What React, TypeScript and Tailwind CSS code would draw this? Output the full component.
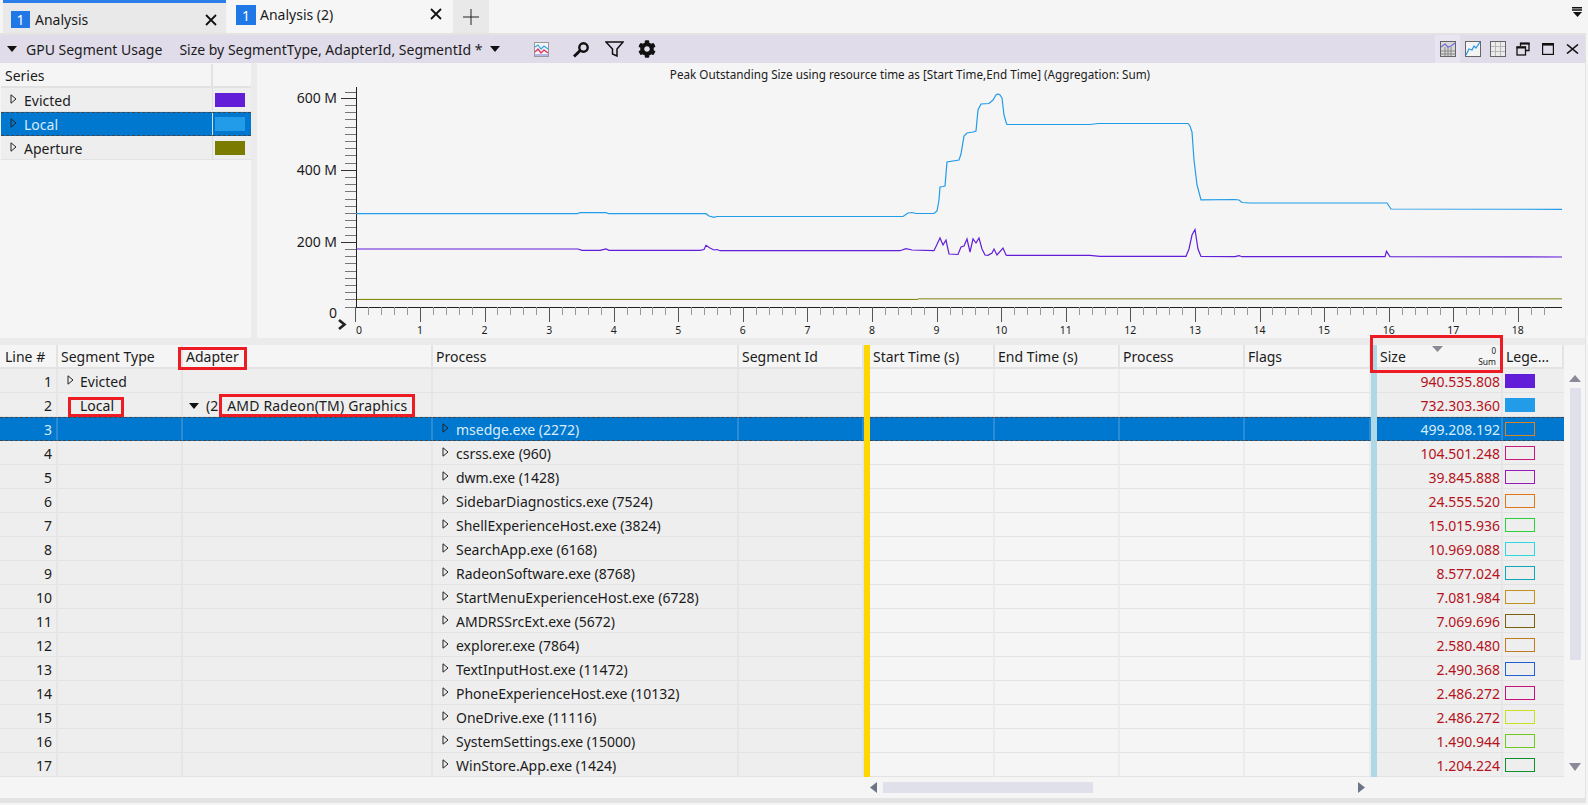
import { FaCog } from "react-icons/fa";

const GRID = "grid grid-cols-[58px_125px_250px_306px_125px_6px_125px_125px_125px_126px_6px_126px_61px]";

const HEADERS = ["Line #", "Segment Type", "Adapter", "Process", "Segment Id", "", "Start Time (s)", "End Time (s)", "Process", "Flags", "", "Size", "Lege..."];

const ROWS = [
  { name: "msedge.exe (2272)", size: "499.208.192", color: "#dd8222" },
  { name: "csrss.exe (960)", size: "104.501.248", color: "#c8197d" },
  { name: "dwm.exe (1428)", size: "39.845.888", color: "#9a19b8" },
  { name: "SidebarDiagnostics.exe (7524)", size: "24.555.520", color: "#e0761a" },
  { name: "ShellExperienceHost.exe (3824)", size: "15.015.936", color: "#2ed03a" },
  { name: "SearchApp.exe (6168)", size: "10.969.088", color: "#2ed8e0" },
  { name: "RadeonSoftware.exe (8768)", size: "8.577.024", color: "#10a8b8" },
  { name: "StartMenuExperienceHost.exe (6728)", size: "7.081.984", color: "#c09020" },
  { name: "AMDRSSrcExt.exe (5672)", size: "7.069.696", color: "#7a6010" },
  { name: "explorer.exe (7864)", size: "2.580.480", color: "#c07a20" },
  { name: "TextInputHost.exe (11472)", size: "2.490.368", color: "#2060d0" },
  { name: "PhoneExperienceHost.exe (10132)", size: "2.486.272", color: "#c8107a" },
  { name: "OneDrive.exe (11116)", size: "2.486.272", color: "#c8e020" },
  { name: "SystemSettings.exe (15000)", size: "1.490.944", color: "#70c820" },
  { name: "WinStore.App.exe (1424)", size: "1.204.224", color: "#109030" },
];

// chart lines, page coordinates
const BLUE = "356,213.7 577,213.7 580,212.6 606,212.6 609,213.7 706,213.7 709,216 714,217.3 717,216.5 903,216.5 908,213 912,212.5 916,213.5 934,213.5 937,211 939,200 940,187 943,186.5 945,186 947,162 959,160 961,154 964,136 967,133 973,132 976,131 978,110 981,104 989,103.5 993,100 996,95 998,94 1000,95 1002,98 1004,115 1006,122 1007,124.5 1090,124.5 1098,123.5 1188,123.5 1190,126 1192,132 1194,160 1197,185 1201,199.8 1235,199.5 1239,200 1242,202.5 1250,203 1387,203 1391,209 1562,209.3";
const PURPLE = "356,249 578,249 582,250.3 600,250.3 606,249 609,250.3 700,250.3 704,249.5 706,245.3 710,248 714,250 717,249.5 720,250.7 900,250.7 906,248.7 912,250 934,250.7 940,238 943,245 946,240 949,254 958,254.5 961,247 964,246 967,239 970,252 973,239 976,243 979,238 982,249 985,255 988,255.3 992,253 994,249 997,255 1003,248 1006,255 1007,255.3 1090,255.3 1100,256.3 1186,256.3 1189,249 1192,235 1195,229.5 1198,249 1201,256.5 1235,256.7 1239,255.7 1242,256.7 1385,256.7 1386.5,251.3 1390,256.7 1562,257";

const Arrow = ({ open }: { open?: boolean }) =>
  open ? (
    <svg width="10" height="6" viewBox="0 0 10 6" className="shrink-0">
      <path d="M0 0H10L5 6Z" fill="#111" />
    </svg>
  ) : (
    <svg width="7" height="10" viewBox="0 0 7 10" className="mb-[3px] shrink-0">
      <path d="M1 .8L6 5L1 9.2Z" fill="none" stroke="#222" strokeWidth="1" />
    </svg>
  );

const Tab = ({ label, active }: { label: string; active?: boolean }) => (
  <div
    className={
      active
        ? "flex h-[33px] w-[223px] items-start bg-[#f6f6f6] pl-[8px] pt-[5px]"
        : "flex h-[33px] w-[223px] items-start border-t-[3px] border-[#2b7de9] bg-[#e9e9e9] pl-[8px] pt-[8px]"
    }
  >
    <div
      className={
        active
          ? "flex h-[20px] w-[20px] items-center justify-center bg-[#1f78e6] text-[14px] text-white"
          : "flex h-[17px] w-[19px] items-center justify-center bg-[#1f78e6] text-[14px] text-white"
      }
    >
      1
    </div>
    <span className={active ? "ml-[4px] text-[14px] leading-[20px] text-[#1b1b1b]" : "ml-[5px] text-[14px] leading-[17px] text-[#1b1b1b]"}>
      {label}
    </span>
    <svg width="12" height="12" viewBox="0 0 12 12" className="ml-auto mr-[9px] mt-[3px]">
      <path d="M1 1L11 11M11 1L1 11" stroke="#111" strokeWidth="1.8" />
    </svg>
  </div>
);

const WindowIcons = () => (
  <div className="ml-auto flex h-full items-center">
    <div className="flex h-full w-[25px] items-center justify-center bg-[#e9e5f0]">
      <svg width="16" height="16" viewBox="0 0 16 16">
        <rect x=".5" y=".5" width="15" height="15" fill="#d8d8d8" stroke="#666" />
        <path d="M1 10H15M1 13H15M5 6V15M8 6V15M11 6V15" stroke="#888" />
        <path d="M1 6L5 3L8 6L11 5L15 2" fill="none" stroke="#6f6fd8" strokeWidth="1.3" />
      </svg>
    </div>
    <div className="flex h-full w-[25px] items-center justify-center">
      <svg width="16" height="16" viewBox="0 0 16 16">
        <rect x=".5" y=".5" width="15" height="15" fill="#f4f4f4" stroke="#666" />
        <path d="M1 14L4 8L7 9L9 5L11 7L15 1" fill="none" stroke="#2b9be8" strokeWidth="1.3" />
      </svg>
    </div>
    <div className="flex h-full w-[25px] items-center justify-center">
      <svg width="16" height="16" viewBox="0 0 16 16">
        <rect x=".5" y=".5" width="15" height="15" fill="#ececec" stroke="#666" />
        <path d="M1 5.5H15M1 10.5H15M5.5 1V15M10.5 1V15" stroke="#b8b8b8" />
      </svg>
    </div>
    <div className="flex h-full w-[25px] items-center justify-center">
      <svg width="14" height="14" viewBox="0 0 14 14">
        <path d="M4.5 4V1.2H13V8.5H10" fill="none" stroke="#111" strokeWidth="1.3" />
        <path d="M4 .8H13.5V2.6H4Z" fill="#111" />
        <rect x="1" y="5" width="8.5" height="8" fill="none" stroke="#111" strokeWidth="1.3" />
        <path d="M.5 4.5H10V6.5H.5Z" fill="#111" />
      </svg>
    </div>
    <div className="flex h-full w-[25px] items-center justify-center">
      <svg width="12" height="12" viewBox="0 0 12 12">
        <rect x=".6" y=".6" width="10.8" height="10.8" fill="none" stroke="#111" strokeWidth="1.2" />
        <path d="M0 0H12V2.6H0Z" fill="#111" />
      </svg>
    </div>
    <div className="flex h-full w-[25px] items-center justify-center">
      <svg width="13" height="10" viewBox="0 0 13 10">
        <path d="M1 .5L12 9.5M12 .5L1 9.5" stroke="#111" strokeWidth="1.6" />
      </svg>
    </div>
  </div>
);

const Toolbar = () => (
  <div className="flex h-[28px] items-center bg-[#e1dcea] text-[14px] text-[#1b1b1b]">
    <svg width="10" height="6" viewBox="0 0 10 6" className="ml-[7px]">
      <path d="M0 0H10L5 6Z" fill="#111" />
    </svg>
    <span className="ml-[9px]">GPU Segment Usage</span>
    <span className="ml-[17px]">Size by SegmentType, AdapterId, SegmentId *</span>
    <svg width="10" height="6" viewBox="0 0 10 6" className="ml-[8px]">
      <path d="M0 0H10L5 6Z" fill="#111" />
    </svg>
    <svg width="15" height="15" viewBox="0 0 15 15" className="ml-[34px]">
      <rect x=".5" y=".5" width="14" height="14" fill="#f4f4f4" stroke="#999" />
      <path d="M1 5L4 3L7 7L10 4L14 7" fill="none" stroke="#35a4e8" strokeWidth="1.2" />
      <path d="M1 10L4 7L7 11L10 8L14 11" fill="none" stroke="#e03b6a" strokeWidth="1.4" />
      <path d="M1 13H14" stroke="#7a7ad8" />
    </svg>
    <svg width="18" height="17" viewBox="0 0 18 16" className="ml-[23px]">
      <circle cx="11.5" cy="6" r="4.2" fill="none" stroke="#111" strokeWidth="2.4" />
      <path d="M8.2 9L2 15" stroke="#111" strokeWidth="3" />
    </svg>
    <svg width="19" height="16" viewBox="0 0 19 16" className="ml-[15px]">
      <path d="M1 1H18L12 8V15L7.5 13V8Z" fill="none" stroke="#111" strokeWidth="1.5" />
    </svg>
    <FaCog size={18} color="#111" className="ml-[14px]" />
    <WindowIcons />
  </div>
);

const Series = () => (
  <div className="w-[251px] shrink-0 pl-[1px] pt-[1px]">
    <div className="grid h-[24px] grid-cols-[212px_38px] border-b-2 border-[#e2e2e2]">
      <div className="border-r-2 border-[#e2e2e2] pl-[4px] pt-[1px] text-[14px] leading-[21px]">Series</div>
      <div />
    </div>
    {[
      { name: "Evicted", color: "#621dd8" },
      { name: "Local", color: "#229be8", selected: true },
      { name: "Aperture", color: "#7b7b00" },
    ].map((s) => (
      <div
        key={s.name}
        className={
          s.selected
            ? "grid h-[24px] grid-cols-[212px_38px] border-y border-dashed border-[#444] bg-[#0078cf] text-[#d8ecfa]"
            : "grid h-[24px] grid-cols-[212px_38px] border-b border-[#e3e3e3] bg-[#eeeeee] text-[#1b1b1b]"
        }
      >
        <div className={`flex items-center gap-[7px] border-r border-solid border-r-[#dcdcdc] pl-[9px] text-[14px] ${s.selected ? "border-r-[#2b8cd6]" : "pt-[2px]"}`}>
          <Arrow />
          {s.name}
        </div>
        <div className="flex items-center pl-[2px]">
          <div className="h-[14px] w-[30px]" style={{ background: s.color }} />
        </div>
      </div>
    ))}
  </div>
);

const Chart = () => (
  <svg width="1329" height="275" viewBox="257 63 1329 275" className="block shrink-0">
    <g className="font-['Noto_Sans',sans-serif]" fill="#1b1b1b">
      <text x="910" y="79" textAnchor="middle" fontSize="11.7">
        Peak Outstanding Size using resource time as [Start Time,End Time] (Aggregation: Sum)
      </text>
      <text x="337" y="103" textAnchor="end" fontSize="14">600 M</text>
      <text x="337" y="175" textAnchor="end" fontSize="14">400 M</text>
      <text x="337" y="247" textAnchor="end" fontSize="14">200 M</text>
      <text x="337" y="318" textAnchor="end" fontSize="14">0</text>
      {Array.from({ length: 19 }, (_, i) => (
        <text key={i} x={i === 0 ? 359 : 355.4 + i * 64.58} y="334" textAnchor="middle" fontSize="10.5">
          {i}
        </text>
      ))}
    </g>
    <g shapeRendering="crispEdges">
      <path d="M356.5 87V307.5H1562" fill="none" stroke="#222" />
      <path d="M345 92.5H356" stroke="#666" />
      {Array.from({ length: 30 }, (_, i) => {
        const y = Math.round(97.7 + i * 7.2) + 0.5;
        const major = i % 10 === 0;
        return <path key={i} d={`M${major ? 341 : 345} ${y}H356`} stroke={major ? "#333" : "#777"} />;
      })}
      {Array.from({ length: 93 }, (_, i) => {
        const x = Math.round(355.4 + i * 12.916) + 0.5;
        const major = i % 5 === 0;
        return <path key={i} d={`M${x} 307V${major ? 322 : 315}`} stroke={major ? "#555" : "#999"} />;
      })}
    </g>
    <polyline points={BLUE} fill="none" stroke="#229be8" strokeWidth="1.2" />
    <polyline points={PURPLE} fill="none" stroke="#621dd8" strokeWidth="1.2" />
    <path d="M357 299.4H918" stroke="#7b7b00" strokeWidth="1" />
    <path d="M918 298.8H1562" stroke="#a8a860" strokeWidth="1.4" />
    <path d="M339 320L344.5 324.5L339 329" fill="none" stroke="#222" strokeWidth="2.6" />
  </svg>
);

const Header = () => (
  <div className={`${GRID} h-[24px] text-[14px] text-[#1b1b1b]`}>
    {HEADERS.map((h, i) =>
      i === 5 ? (
        <div key={i} className="bg-[#ffd700]" />
      ) : i === 10 ? (
        <div key={i} className="bg-[#add8e6]" />
      ) : (
        <div key={i} className="relative border-b-2 border-r-2 border-[#e3e3e3] pl-[3px] pt-[1px] first:pl-[5px]">
          {h}
          {h === "Size" && (
            <>
              <svg width="11" height="6" viewBox="0 0 11 6" className="absolute left-[55px] top-[1px]">
                <path d="M0 0H11L5.5 6Z" fill="#8a8a94" />
              </svg>
              <span className="absolute right-[5px] top-[0px] text-[8px] leading-[12px]">0</span>
              <span className="absolute right-[5px] top-[11px] text-[8.5px] leading-[11px]">Sum</span>
            </>
          )}
        </div>
      ),
    )}
  </div>
);

const Row = (props: {
  line: number;
  segment?: string;
  expand?: boolean;
  adapter?: boolean;
  name?: string;
  size: string;
  swatch: string;
  filled?: boolean;
  selected?: boolean;
}) => {
  const { selected } = props;
  const base = selected
    ? "flex items-center border-y border-dashed border-[#444] bg-[#0078cf] text-[#d8ecfa]"
    : "flex items-center border-b border-[#e3e3e3] text-[#1b1b1b]";
  const key = `${base} border-r-2 [border-right-style:solid] ${selected ? "border-r-[#2b8cd6]" : "border-r-[#e6e6e6] bg-[#eeeeee]"}`;
  const open = `${base} border-r-2 [border-right-style:solid] ${selected ? "border-r-[#2b8cd6]" : "border-r-[#ececec] bg-[#f5f5f5]"}`;
  const text = selected ? "" : "pt-[2px]";

  return (
    <div className={`${GRID} h-[24px] text-[14px]`}>
      <div className={`${key} ${text} justify-end pr-[4px]`}>{props.line}</div>
      <div className={`${key} ${text} pl-[9px]`}>
        {props.expand && <Arrow />}
        {props.segment && !props.expand && <div className="w-[7px]" />}
        <span className="ml-[6px]">{props.segment}</span>
      </div>
      <div className={`${key} ${text} pl-[6px]`}>
        {props.adapter && (
          <>
            <Arrow open />
            <span className="ml-[7px]">(2</span>
            <span className="ml-[9px] whitespace-nowrap tracking-[0.18px]">AMD Radeon(TM) Graphics</span>
          </>
        )}
      </div>
      <div className={`${key} ${text} gap-[7px] pl-[9px]`}>
        {props.name && <Arrow />}
        {props.name}
      </div>
      <div className={key} />
      <div className="bg-[#ffd700]" />
      <div className={open} />
      <div className={open} />
      <div className={open} />
      <div className={open} />
      <div className="bg-[#add8e6]" />
      <div className={`${key} ${text} justify-end pr-[1px] ${selected ? "" : "text-[#b5121b]"}`}>{props.size}</div>
      <div className={`${base} ${selected ? "" : "bg-[#eeeeee]"} pl-[2px]`}>
        <div
          className="h-[14px] w-[30px] border"
          style={{ borderColor: props.swatch, background: props.filled ? props.swatch : "transparent" }}
        />
      </div>
    </div>
  );
};

const VScroll = () => (
  <div className="flex w-[22px] flex-col items-center pl-[1px] pt-[30px]">
    <svg width="12" height="7" viewBox="0 0 12 7">
      <path d="M6 0L12 7H0Z" fill="#8a8a9a" />
    </svg>
    <div className="mt-[6px] h-[272px] w-[11px] bg-[#dfe0e9]" />
    <svg width="12" height="8" viewBox="0 0 12 8" className="mt-[103px]">
      <path d="M0 0H12L6 8Z" fill="#8a8a9a" />
    </svg>
  </div>
);

const HScroll = () => (
  <div className="flex h-[21px] items-center pl-[870px]">
    <svg width="7" height="11" viewBox="0 0 7 11">
      <path d="M7 0V11L0 5.5Z" fill="#6e7488" />
    </svg>
    <div className="ml-[6px] h-[11px] w-[210px] bg-[#dfe0e9]" />
    <svg width="7" height="11" viewBox="0 0 7 11" className="ml-[265px]">
      <path d="M0 0V11L7 5.5Z" fill="#6e7488" />
    </svg>
  </div>
);

export default function App() {
  return (
    <div className="h-[805px] w-[1588px] overflow-hidden bg-[#f5f5f5] font-['Noto_Sans',sans-serif] text-[#1b1b1b]">
      {/* tabs */}
      <div className="flex h-[33px] pl-[3px]">
        <Tab label="Analysis" />
        <div className="w-[2px]" />
        <Tab label="Analysis (2)" active />
        <div className="w-[2px]" />
        <div className="flex h-[33px] w-[36px] items-center justify-center bg-[#e9e9e9]">
          <svg width="16" height="16" viewBox="0 0 16 16">
            <path d="M8 0V16M0 8H16" stroke="#222" strokeWidth="1" />
          </svg>
        </div>
        <svg width="11" height="11" viewBox="0 0 11 11" className="ml-auto mr-[5px] mt-[7px]">
          <path d="M0 .8H10M0 3H10" stroke="#111" strokeWidth="1.5" />
          <path d="M1 5H10L5.5 10Z" fill="#111" />
        </svg>
      </div>
      <div className="w-[1586px] border-r border-[#e3e3e3]">
        <div className="h-[2px] bg-[#e3e3e3]" />
        <Toolbar />
        <div className="flex h-[275px]">
          <Series />
          <div className="w-[6px] shrink-0 bg-[#ebebeb]" />
          <Chart />
        </div>
        <div className="h-[7px] bg-[#ebebeb]" />
        {/* table */}
        <div className="flex h-[432px]">
          <div className="w-[1564px] shrink-0">
            <Header />
            <Row line={1} segment="Evicted" expand size="940.535.808" swatch="#621dd8" filled />
            <Row line={2} segment="Local" adapter size="732.303.360" swatch="#229be8" filled />
            {ROWS.map((r, i) => (
              <Row key={r.name} line={i + 3} name={r.name} size={r.size} swatch={r.color} selected={i === 0} />
            ))}
          </div>
          <VScroll />
        </div>
        <HScroll />
        <div className="h-[5px] bg-[#e3e3e3]" />
      </div>

      {/* red annotation boxes */}
      <div className="absolute left-[178px] top-[347px] h-[23px] w-[69px] border-[3px] border-[#ed1c24]" />
      <div className="absolute left-[68px] top-[397px] h-[20px] w-[56px] border-[3px] border-[#ed1c24]" />
      <div className="absolute left-[219px] top-[394px] h-[23px] w-[196px] border-[3px] border-[#ed1c24]" />
      <div className="absolute left-[1370px] top-[335px] h-[38px] w-[133px] border-[3px] border-[#ed1c24]" />
    </div>
  );
}
